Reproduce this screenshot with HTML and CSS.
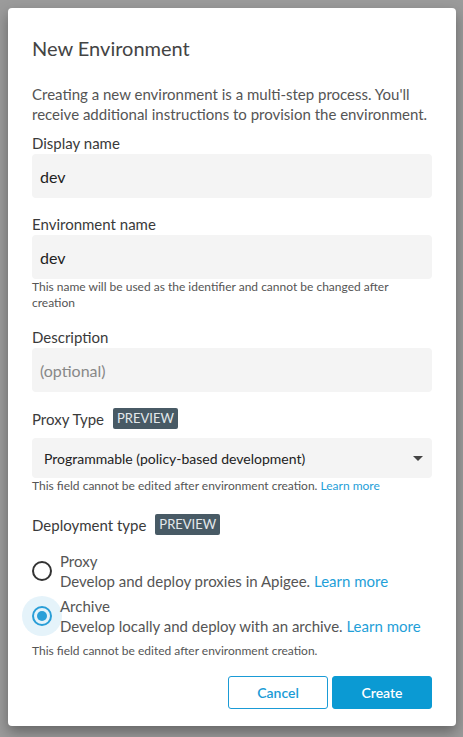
FILE: index.html
```html
<!DOCTYPE html>
<html lang="en">
<head>
<meta charset="utf-8">
<title>New Environment</title>
<link rel="stylesheet" href="styles.css">
</head>
<body>
<div class="backdrop">
  <div class="dialog">
    <h1 class="title">New Environment</h1>
    <p class="intro">Creating a new environment is a multi-step process. You'll receive additional instructions to provision the environment.</p>

    <div class="field">
      <label class="label">Display name</label>
      <div class="input">dev</div>
    </div>

    <div class="field">
      <label class="label">Environment name</label>
      <div class="input">dev</div>
      <div class="hint">This name will be used as the identifier and cannot be changed after creation</div>
    </div>

    <div class="field">
      <label class="label">Description</label>
      <div class="input placeholder">(optional)</div>
    </div>

    <div class="field">
      <div class="label-row"><span class="label-text">Proxy Type</span><span class="badge">PREVIEW</span></div>
      <div class="select">
        <span>Programmable (policy-based development)</span>
        <svg class="caret" width="10" height="5" viewBox="0 0 10 5"><path d="M0 0h10L5 5z" fill="#444"/></svg>
      </div>
      <div class="hint">This field cannot be edited after environment creation. <a class="link">Learn more</a></div>
    </div>

    <div class="field deploy">
      <div class="label-row"><span class="label-text">Deployment type</span><span class="badge">PREVIEW</span></div>
      <div class="options">
        <div class="option">
          <span class="radio"></span>
          <div class="option-text">
            <div>Proxy</div>
            <div>Develop and deploy proxies in Apigee. <a class="link">Learn more</a></div>
          </div>
        </div>
        <div class="option">
          <span class="radio checked"></span>
          <div class="option-text">
            <div>Archive</div>
            <div>Develop locally and deploy with an archive. <a class="link">Learn more</a></div>
          </div>
        </div>
      </div>
      <div class="hint">This field cannot be edited after environment creation.</div>
    </div>

    <div class="actions">
      <button class="btn btn-outline">Cancel</button>
      <button class="btn btn-primary">Create</button>
    </div>
  </div>
</div>
</body>
</html>
```

FILE: styles.css
```css
* { box-sizing: border-box; }
html, body {
  margin: 0;
  padding: 0;
  background: #9b9b9b;
  font-family: Lato, "Open Sans", sans-serif;
}
.backdrop {
  padding: 8px 7px 11px 8px;
}
.dialog {
  background: #fff;
  border-radius: 4px;
  padding: 24px 24px 17px 24px;
  box-shadow: 0 6px 14px rgba(0,0,0,0.35);
}
.title {
  margin: 0;
  font-size: 20px;
  line-height: 32px;
  font-weight: 400;
  color: #444;
}
.intro {
  margin: 20px -12px 9px 0;
  font-size: 15px;
  line-height: 20px;
  color: #555;
}
.field { margin-bottom: 16px; }
.label {
  display: block;
  font-size: 15px;
  line-height: 20px;
  color: #3a3a3a;
  margin-bottom: 1px;
}
.input {
  height: 44px;
  background: #f4f4f4;
  border-radius: 4px;
  padding: 0 8px;
  display: flex;
  align-items: center;
  font-size: 16px;
  color: #222;
}
.input.placeholder { color: #888; }
.hint {
  font-size: 12px;
  line-height: 16px;
  color: #555;
}
.link { color: #1fa0d8; text-decoration: none; }
.label-row {
  display: flex;
  align-items: center;
  gap: 9px;
  height: 21px;
  margin-bottom: 9px;
  font-size: 15px;
  color: #3a3a3a;
}
.badge {
  background: #485a65;
  color: #e3e9ec;
  font-size: 13px;
  line-height: 21px;
  padding: 0 4px;
  border-radius: 2px;
}
.select {
  height: 40px;
  background: #f4f4f4;
  border-radius: 4px;
  padding: 0 9px 0 12px;
  display: flex;
  align-items: center;
  justify-content: space-between;
  font-size: 14px;
  color: #222;
}
.caret { margin-top: 1px; }
.field.deploy { margin-top: 20px; margin-bottom: 17px; }
.deploy .label-row { margin-bottom: 13px; }
.options { display: flex; flex-direction: column; }
.option {
  display: flex;
  align-items: center;
  gap: 8px;
  padding: 2px 0;
  height: 45px;
  font-size: 15px;
  line-height: 20px;
  color: #555;
}
.radio {
  position: relative;
  flex: none;
  width: 20px;
  height: 20px;
  border: 2px solid #333;
  border-radius: 50%;
}
.radio.checked {
  border-color: #2a9fd8;
}
.radio.checked::before {
  content: "";
  position: absolute;
  left: -12px;
  top: -12px;
  width: 40px;
  height: 40px;
  border-radius: 50%;
  background: rgba(42,159,216,0.12);
}
.radio.checked::after {
  content: "";
  position: absolute;
  left: 3px;
  top: 3px;
  width: 10px;
  height: 10px;
  border-radius: 50%;
  background: #2a9fd8;
}
.deploy .hint { margin-top: 5px; }
.actions {
  display: flex;
  justify-content: flex-end;
  gap: 4px;
}
.btn {
  width: 100px;
  height: 33px;
  border-radius: 3px;
  font-family: Lato, "Open Sans", sans-serif;
  font-size: 14px;
  font-weight: 600;
  cursor: pointer;
}
.btn-outline {
  background: #fff;
  border: 1px solid #1a9bd6;
  color: #1a9bd6;
}
.btn-primary {
  background: #0b9ad3;
  border: 1px solid #0b9ad3;
  color: #fff;
}
```
